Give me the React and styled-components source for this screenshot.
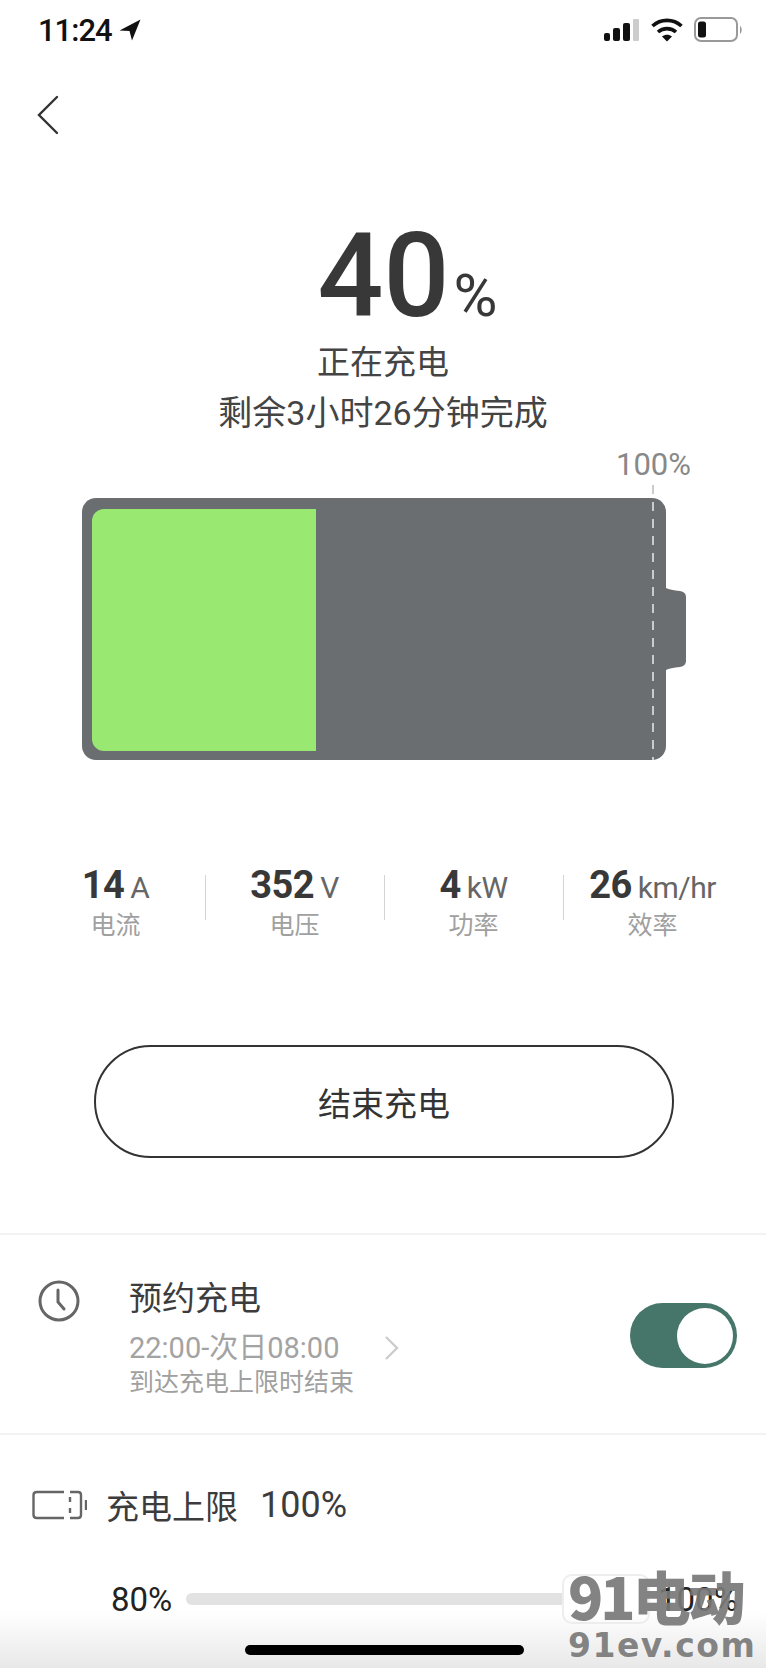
import React from "react";
import styled, { createGlobalStyle } from "styled-components";

const GlobalStyle = createGlobalStyle`
  html, body {
    margin: 0;
    padding: 0;
    background: #fff;
  }
  * {
    box-sizing: border-box;
  }
`;

const Page = styled.main`
  position: relative;
  width: 766px;
  height: 1668px;
  overflow: hidden;
  background: #fff;
  color: #333;
  font-family: Roboto, "Noto Sans CJK SC", sans-serif;
`;

const StatusBar = styled.header`
  display: flex;
  align-items: center;
  justify-content: space-between;
  height: 60px;
  padding: 0 22px 0 38px;
`;

const Clock = styled.div`
  display: flex;
  align-items: center;
  gap: 7px;
  font-size: 31px;
  font-weight: 500;
  letter-spacing: -1px;
  color: #111;
`;

const StatusIcons = styled.div`
  display: flex;
  align-items: center;
  gap: 11px;
`;

const BackRow = styled.div`
  display: flex;
  padding: 35px 0 0 36px;
  height: 90px;
`;

const Hero = styled.section`
  display: flex;
  flex-direction: column;
  align-items: center;
  padding-top: 68px;
`;

const BigValue = styled.div`
  display: flex;
  align-items: baseline;
  gap: 4px;
  height: 116px;
  margin-bottom: 3px;
  padding-left: 49px;
  line-height: 116px;
  font-size: 116px;
  font-weight: 500;
  color: #383838;
`;

const BigUnit = styled.span`
  font-size: 60px;
  font-weight: 400;
`;

const HeroLine = styled.div`
  height: 51px;
  line-height: 51px;
  font-size: ${(p) => p.$size}px;
  color: #444;
`;

const LimitLabel = styled.div`
  align-self: flex-end;
  padding-right: 75px;
  height: 30px;
  line-height: 30px;
  font-size: 31px;
  color: #888;
  margin-top: 11px;
`;

const BatteryRow = styled.section`
  display: flex;
  align-items: center;
  margin: 18px 0 0 82px;
`;

const BatteryBody = styled.div`
  position: relative;
  width: 584px;
  height: 262px;
  padding: 11px 10px 9px;
  border-radius: 14px;
  background: #6b6e70;
`;

const BatteryFill = styled.div`
  height: 100%;
  border-radius: 12px 0 0 12px;
  background: #98e872;
`;

const DashLine = styled.div`
  position: absolute;
  top: -13px;
  bottom: 0;
  right: 12px;
  width: 2px;
  background: repeating-linear-gradient(to bottom, #c9cbcc 0 9px, transparent 9px 17px);
`;

const Stats = styled.section`
  display: grid;
  grid-template-columns: repeat(4, 179px);
  margin: 105px 0 0 26px;
`;

const Stat = styled.div`
  position: relative;
  display: flex;
  flex-direction: column;
  align-items: center;
  ${(p) =>
    p.$divided &&
    `
    &::before {
      content: "";
      position: absolute;
      left: 0;
      top: 10px;
      height: 45px;
      width: 1px;
      background: #d4d4d4;
    }
  `}
`;

const StatValue = styled.div`
  display: flex;
  align-items: baseline;
  gap: 6px;
  height: 40px;
  line-height: 40px;
  font-size: 38px;
  font-weight: 700;
  letter-spacing: -0.5px;
  color: #383838;
`;

const StatUnit = styled.span`
  font-size: 30px;
  font-weight: 400;
  color: #666;
`;

const StatLabel = styled.div`
  margin-top: 3px;
  height: 36px;
  line-height: 36px;
  font-size: 25px;
  color: #a0a0a0;
`;

const StopButton = styled.button`
  display: block;
  width: 580px;
  height: 113px;
  margin: 101px 0 0 94px;
  border: 2px solid #333;
  border-radius: 57px;
  background: #fff;
  font: inherit;
  font-size: 33px;
  color: #333;
`;

const ScheduleRow = styled.section`
  display: flex;
  align-items: flex-start;
  height: 202px;
  margin-top: 75px;
  padding: 42px 29px 0 38px;
  border-top: 2px solid #f2f2f2;
  border-bottom: 2px solid #f2f2f2;
`;

const ClockIcon = styled.svg`
  margin-top: 3px;
  flex: none;
`;

const ScheduleText = styled.div`
  display: flex;
  flex-direction: column;
  margin-left: 49px;
`;

const ScheduleTitle = styled.div`
  height: 44px;
  line-height: 44px;
  font-size: 33px;
  color: #3c3c3c;
`;

const ScheduleTime = styled.div`
  display: flex;
  align-items: center;
  gap: 45px;
  margin-top: 8px;
  height: 38px;
  line-height: 38px;
  font-size: 29px;
  color: #a3a3a3;
`;

const ScheduleNote = styled.div`
  height: 32px;
  line-height: 32px;
  font-size: 25px;
  color: #a0a0a0;
`;

const Toggle = styled.div`
  display: flex;
  align-items: center;
  justify-content: flex-end;
  width: 107px;
  height: 65px;
  margin: 26px 0 0 auto;
  padding: 0 4px;
  border-radius: 33px;
  background: #46766a;
`;

const ToggleKnob = styled.div`
  width: 56px;
  height: 56px;
  border-radius: 50%;
  background: #fff;
`;

const LimitRow = styled.section`
  display: flex;
  align-items: center;
  height: 46px;
  margin-top: 47px;
  padding-left: 32px;
  font-size: 33px;
  color: #3c3c3c;
`;

const LimitName = styled.span`
  margin-left: 19px;
`;

const LimitValue = styled.span`
  margin-left: 22px;
  font-size: 36px;
`;

const SliderRow = styled.section`
  display: flex;
  align-items: center;
  height: 40px;
  margin-top: 51px;
  padding-left: 111px;
  font-size: 33px;
  color: #222;
`;

const SliderTrack = styled.div`
  position: relative;
  width: 400px;
  height: 12px;
  margin-left: 14px;
  border-radius: 6px;
  background: #e2e2e2;
`;

const SliderThumb = styled.div`
  position: absolute;
  left: 376px;
  top: -19px;
  width: 88px;
  height: 50px;
  border: 2px solid #eee;
  border-radius: 10px;
  background: #fff;
`;

const SliderMax = styled.span`
  position: absolute;
  left: 658px;
`;

const BottomFade = styled.div`
  position: absolute;
  left: 0;
  right: 0;
  bottom: 0;
  height: 56px;
  background: linear-gradient(to bottom, rgba(232, 232, 232, 0), #e8e8e8);
`;

const HomeBar = styled.div`
  position: absolute;
  left: 245px;
  top: 1645px;
  width: 279px;
  height: 10px;
  border-radius: 5px;
  background: #000;
`;

const Watermark = styled.div`
  position: absolute;
  left: 568px;
  top: 1562px;
  display: flex;
  flex-direction: column;
  color: rgba(120, 120, 120, 0.92);
  font-weight: 700;
`;

const WatermarkTop = styled.div`
  height: 66px;
  line-height: 66px;
  font-size: 58px;
  letter-spacing: -3px;
  font-family: "Noto Sans CJK SC", sans-serif;
  font-weight: 900;
`;

const WatermarkBottom = styled.div`
  height: 30px;
  line-height: 30px;
  margin-top: 3px;
  font-size: 33px;
  letter-spacing: 1.5px;
  font-family: "DejaVu Sans", sans-serif;
`;

const stats = [
  { value: "14", unit: "A", label: "电流" },
  { value: "352", unit: "V", label: "电压" },
  { value: "4", unit: "kW", label: "功率" },
  { value: "26", unit: "km/hr", label: "效率" },
];

export default function App() {
  return (
    <Page>
      <GlobalStyle />
      <StatusBar>
        <Clock>
          11:24
          <svg width="22" height="22" viewBox="0 0 22 22">
            <path d="M0.5 11.5 L21.5 0.5 L13 21.5 L10.5 12 Z" fill="#111" />
          </svg>
        </Clock>
        <StatusIcons>
          <svg width="36" height="24" viewBox="0 0 36 24">
            <rect x="0" y="15" width="6" height="8" rx="2" fill="#111" />
            <rect x="9" y="10" width="7" height="13" rx="2" fill="#111" />
            <rect x="19" y="5" width="7" height="18" rx="2" fill="#111" />
            <rect x="29" y="1" width="6" height="22" rx="1" fill="#ccc" />
          </svg>
          <svg width="32" height="24" viewBox="0 0 32 24" fill="none" stroke="#111" strokeWidth="3.6">
            <path d="M1.5 8 C9.5 0.5 22.5 0.5 30.5 8" />
            <path d="M7 14 C12 9.5 20 9.5 25 14" />
            <path d="M16 23.5 L11 18.5 C14 16 18 16 21 18.5 Z" fill="#111" stroke="none" />
          </svg>
          <svg width="50" height="26" viewBox="0 0 50 26">
            <rect x="1" y="1" width="42" height="23" rx="6" fill="none" stroke="#999" strokeWidth="2" />
            <rect x="4" y="4.5" width="8" height="16" rx="2.5" fill="#111" />
            <path d="M46 9 C48 10 48.5 15 46 17 Z" fill="#999" />
          </svg>
        </StatusIcons>
      </StatusBar>

      <BackRow>
        <svg width="24" height="40" viewBox="0 0 24 40" fill="none" stroke="#333" strokeWidth="2.4" strokeLinecap="round">
          <path d="M21 2 L3 20 L21 38" />
        </svg>
      </BackRow>

      <Hero>
        <BigValue>
          40<BigUnit>%</BigUnit>
        </BigValue>
        <HeroLine $size={33}>正在充电</HeroLine>
        <HeroLine $size={34}>剩余3小时26分钟完成</HeroLine>
        <LimitLabel>100%</LimitLabel>
      </Hero>

      <BatteryRow>
        <BatteryBody>
          <BatteryFill style={{ width: `${(224 / 564) * 100}%` }} />
          <DashLine />
        </BatteryBody>
        <svg width="20" height="82" viewBox="0 0 20 82">
          <path d="M0 0 Q4 2 14 3 Q20 4 20 9 L20 73 Q20 78 14 79 Q4 80 0 82 Z" fill="#6b6e70" />
        </svg>
      </BatteryRow>

      <Stats>
        {stats.map((s, i) => (
          <Stat key={s.label} $divided={i > 0}>
            <StatValue>
              {s.value}
              <StatUnit>{s.unit}</StatUnit>
            </StatValue>
            <StatLabel>{s.label}</StatLabel>
          </Stat>
        ))}
      </Stats>

      <StopButton>结束充电</StopButton>

      <ScheduleRow>
        <ClockIcon width="42" height="42" viewBox="0 0 42 42" fill="none" stroke="#666" strokeWidth="3" strokeLinecap="round">
          <circle cx="21" cy="21" r="19" />
          <path d="M20 10 L20 22 L26 29" />
        </ClockIcon>
        <ScheduleText>
          <ScheduleTitle>预约充电</ScheduleTitle>
          <ScheduleTime>
            22:00-次日08:00
            <svg width="16" height="26" viewBox="0 0 16 26" fill="none" stroke="#ccc" strokeWidth="2.4">
              <path d="M2 2 L13 13 L2 24" />
            </svg>
          </ScheduleTime>
          <ScheduleNote>到达充电上限时结束</ScheduleNote>
        </ScheduleText>
        <Toggle>
          <ToggleKnob />
        </Toggle>
      </ScheduleRow>

      <LimitRow>
        <svg width="55" height="30" viewBox="0 0 55 30" fill="none" stroke="#666" strokeWidth="2.4">
          <path d="M32 2 L5 2 Q1.5 2 1.5 5 L1.5 25 Q1.5 28 5 28 L32 28" />
          <path d="M38 2 L46 2 Q49 2 49 5 L49 25 Q49 28 46 28 L38 28" />
          <path d="M38 7 L38 12 M38 18 L38 23" />
          <path d="M54 10 L54 20" />
        </svg>
        <LimitName>充电上限</LimitName>
        <LimitValue>100%</LimitValue>
      </LimitRow>

      <SliderRow>
        80%
        <SliderTrack>
          <SliderThumb />
        </SliderTrack>
        <SliderMax>100%</SliderMax>
      </SliderRow>

      <BottomFade />
      <HomeBar />
      <Watermark>
        <WatermarkTop>91电动</WatermarkTop>
        <WatermarkBottom>91ev.com</WatermarkBottom>
      </Watermark>
    </Page>
  );
}
